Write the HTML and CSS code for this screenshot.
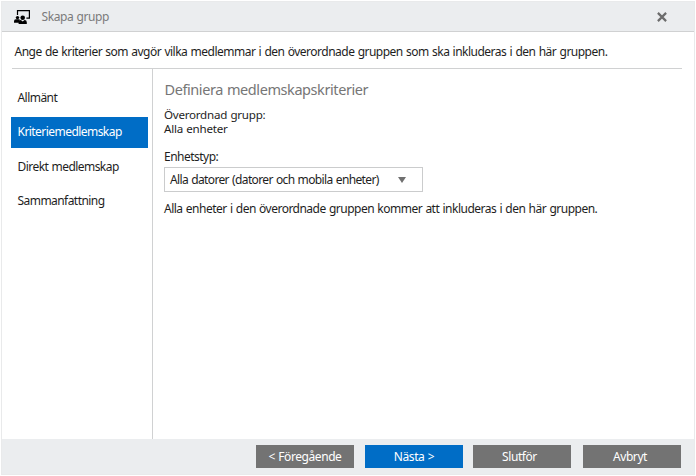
FILE: index.html
```html
<!DOCTYPE html>
<html lang="sv">
<head>
<meta charset="utf-8">
<title>Skapa grupp</title>
<link rel="stylesheet" href="styles.css">
</head>
<body>
<div class="dialog">
  <header class="titlebar">
    <svg class="group-icon" width="16" height="15" viewBox="0 0 16 15">
      <path d="M3.5 5V.6h11.9v7.6h-3" fill="none" stroke="#000" stroke-width="1.2"/>
      <circle cx="3.5" cy="7.6" r="1.7"/>
      <path d="M0 12.8V11.3q0-2 2-2h3.6v3.5z"/>
      <circle cx="8.7" cy="7.7" r="2.3"/>
      <path d="M4.6 14v-1.7q0-2.4 2.3-2.4l1.8 1.5 1.8-1.5q2.3 0 2.3 2.4V14z"/>
    </svg>
    <span class="title">Skapa grupp</span>
    <svg class="close" width="10" height="10" viewBox="0 0 10 10"><path d="M.9.9l8.2 8.2M9.1.9L.9 9.1" stroke="#6c6c6c" stroke-width="2.2"/></svg>
  </header>
  <p class="intro">Ange de kriterier som avgör vilka medlemmar i den överordnade gruppen som ska inkluderas i den här gruppen.</p>
  <div class="body">
    <nav class="steps">
      <a class="step">Allmänt</a>
      <a class="step active">Kriteriemedlemskap</a>
      <a class="step">Direkt medlemskap</a>
      <a class="step">Sammanfattning</a>
    </nav>
    <main class="content">
      <h1>Definiera medlemskapskriterier</h1>
      <p class="parent">Överordnad grupp:</p>
      <p class="parent-name">Alla enheter</p>
      <p class="label">Enhetstyp:</p>
      <div class="select"><span>Alla datorer (datorer och mobila enheter)</span><i class="arrow"></i></div>
      <p class="note">Alla enheter i den överordnade gruppen kommer att inkluderas i den här gruppen.</p>
    </main>
  </div>
  <footer class="footer">
    <button class="prev">&lt; Föregående</button>
    <button class="next">Nästa &gt;</button>
    <button class="finish">Slutför</button>
    <button class="cancel">Avbryt</button>
  </footer>
</div>
</body>
</html>
```
FILE: styles.css
```css
* { box-sizing: border-box; }
body { margin: 0; background: #fff; color: #1e1e1e; font: 12px/14px "Noto Sans", "Open Sans", sans-serif; letter-spacing: -0.51px; word-spacing: 0.65px; }
p, h1 { margin: 0; white-space: nowrap; }
.dialog { display: flex; flex-direction: column; width: 694px; height: 474px; margin: 1px; border: 1px solid #e9eaeb; background: #fff; }
.titlebar { display: flex; align-items: center; flex: none; height: 30px; padding: 0 27px 0 12px; background: #ebedef; border-bottom: 1px solid #d0d1d2; color: #7b7b7b; }
.group-icon { flex: none; margin-top: 2px; }
.title { margin: 1px 0 0 11.5px; letter-spacing: -0.43px; }
.close { margin-left: auto; }
.intro { flex: none; height: 37px; margin: 0 12px 0 10px; padding: 13px 0 0 2.5px; border-bottom: 1px solid #d0d1d2; }
.body { display: flex; flex: 1; min-height: 0; }
.steps { flex: none; width: 151px; padding: 13px 4px 0 9px; border-right: 1px solid #d0d1d2; letter-spacing: -0.55px; }
.step { display: flex; align-items: center; height: 31px; margin-bottom: 3.6px; padding-left: 6.5px; }
.active { background: #006dc6; color: #fff; }
.content { flex: 1; padding: 10px 0 0 11px; }
h1 { padding-left: 0.5px; font-size: 14.5px; line-height: 20px; font-weight: 400; letter-spacing: -0.42px; color: #767676; }
.parent, .parent-name { font-size: 11.6px; letter-spacing: -0.25px; }
.parent { margin-top: 9px; }
.label { margin-top: 14px; }
.select { display: flex; align-items: center; width: 259px; height: 25px; margin-top: 3px; padding: 0 16px 0 5px; border: 1px solid #cbcccd; letter-spacing: -0.63px; white-space: nowrap; }
.arrow { margin-left: auto; border: 4px solid transparent; border-top: 6px solid #707070; border-bottom: 0; }
.note { margin-top: 10px; }
.footer { display: flex; flex: none; height: 35px; padding: 6px 13px 0 254px; background: #ebedef; }
button { width: 98px; height: 23px; padding: 0; border: 0; background: #737373; color: #fff; font: inherit; letter-spacing: -0.43px; word-spacing: inherit; }
.next { margin-left: 11px; background: #006dc6; }
.finish { margin-left: 10px; padding-right: 5px; }
.cancel { margin-left: 12px; padding-right: 4px; }
```
